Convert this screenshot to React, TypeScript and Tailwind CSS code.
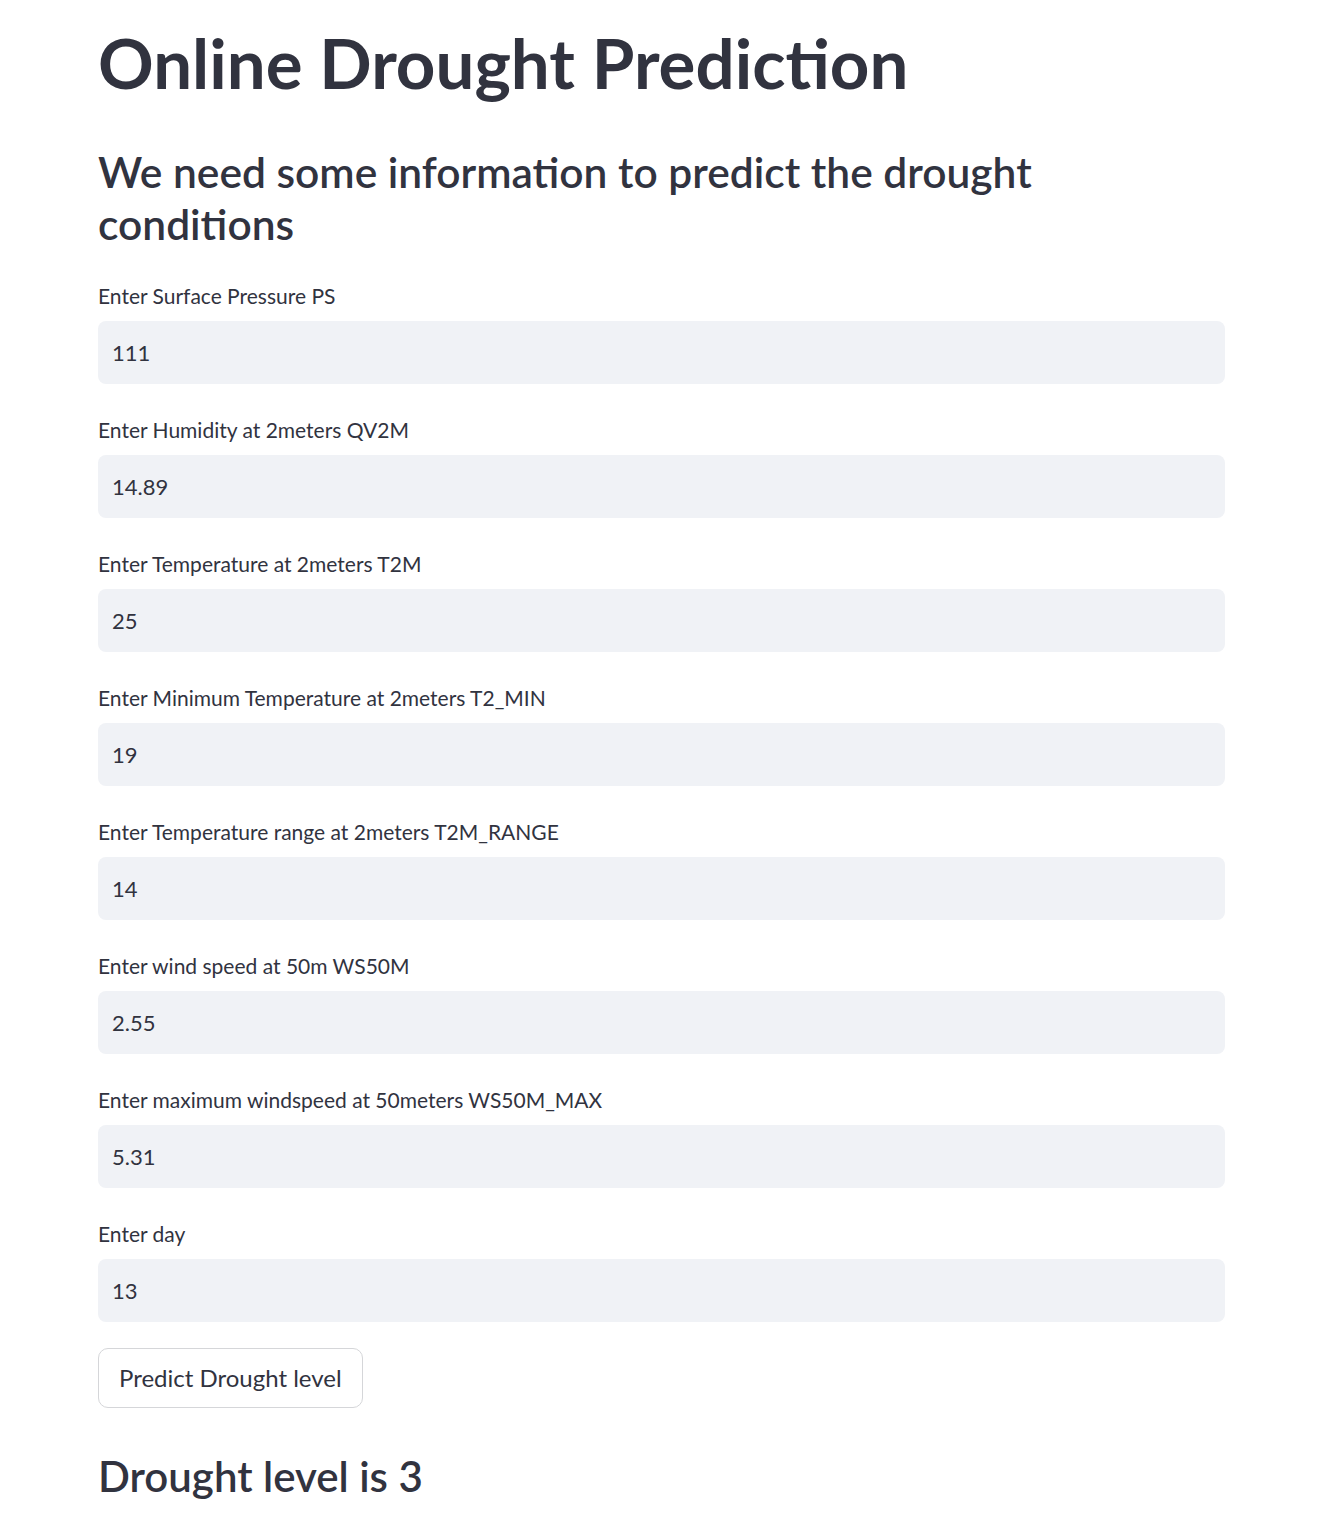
const fields = [
  { label: 'Enter Surface Pressure PS', value: '111' },
  { label: 'Enter Humidity at 2meters QV2M', value: '14.89' },
  { label: 'Enter Temperature at 2meters T2M', value: '25' },
  { label: 'Enter Minimum Temperature at 2meters T2_MIN', value: '19' },
  { label: 'Enter Temperature range at 2meters T2M_RANGE', value: '14' },
  { label: 'Enter wind speed at 50m WS50M', value: '2.55' },
  { label: 'Enter maximum windspeed at 50meters WS50M_MAX', value: '5.31' },
  { label: 'Enter day', value: '13' },
]

export default function App() {
  return (
    <div className="min-h-[1514px] bg-white text-[#31333F]" style={{ fontFamily: 'Lato, "Open Sans", sans-serif' }}>
      <div className="ml-[98px] w-[1127px] pt-[23px]">
        <h1 className="text-[69px] leading-[80px] font-bold">Online Drought Prediction</h1>

        <h2 className="mt-[43px] text-[42.5px] leading-[52px] font-semibold">
          We need some information to predict the drought
          <br />
          conditions
        </h2>

        <div className="mt-[32px] flex flex-col gap-[32px]">
          {fields.map((f) => (
            <div key={f.label}>
              <label className="block text-[21px] leading-[28px]">{f.label}</label>
              <div className="mt-[11px] flex h-[63px] items-center rounded-lg bg-[#F0F2F6] px-[14px] text-[22px]">
                {f.value}
              </div>
            </div>
          ))}
        </div>

        <button className="mt-[26px] flex h-[60px] items-center rounded-[10px] border border-[#D5D6D9] bg-white px-[20px] text-[24px] text-[#31333F]">
          Predict Drought level
        </button>

        <h3 className="mt-[43px] text-[42px] leading-[50px] font-semibold">Drought level is 3</h3>
      </div>
    </div>
  )
}
